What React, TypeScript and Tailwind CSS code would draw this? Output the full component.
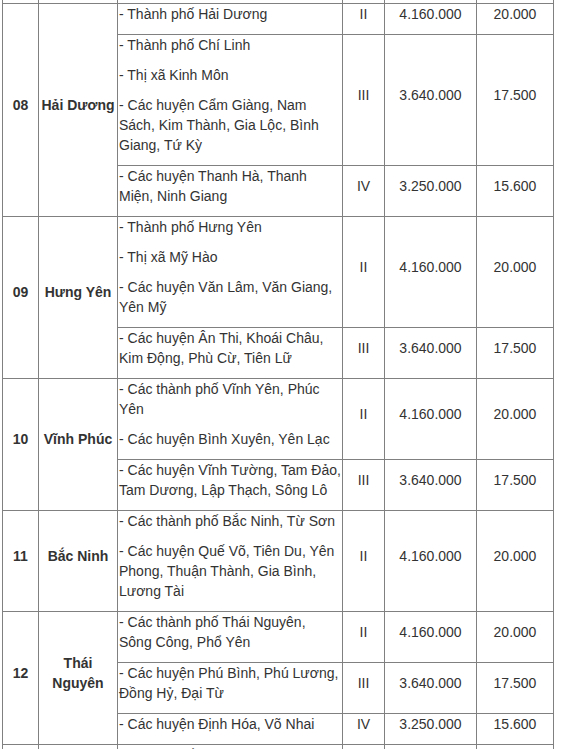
import React from "react";

type Row = { areas: string[]; region: string; monthly: string; hourly: string };
type Province = { no: string; name: string; rows: Row[] };

const provinces: Province[] = [
  {
    no: "08",
    name: "Hải Dương",
    rows: [
      { areas: ["- Thành phố Hải Dương"], region: "II", monthly: "4.160.000", hourly: "20.000" },
      {
        areas: [
          "- Thành phố Chí Linh",
          "- Thị xã Kinh Môn",
          "- Các huyện Cẩm Giàng, Nam Sách, Kim Thành, Gia Lộc, Bình Giang, Tứ Kỳ",
        ],
        region: "III",
        monthly: "3.640.000",
        hourly: "17.500",
      },
      { areas: ["- Các huyện Thanh Hà, Thanh Miện, Ninh Giang"], region: "IV", monthly: "3.250.000", hourly: "15.600" },
    ],
  },
  {
    no: "09",
    name: "Hưng Yên",
    rows: [
      {
        areas: ["- Thành phố Hưng Yên", "- Thị xã Mỹ Hào", "- Các huyện Văn Lâm, Văn Giang, Yên Mỹ"],
        region: "II",
        monthly: "4.160.000",
        hourly: "20.000",
      },
      {
        areas: ["- Các huyện Ân Thi, Khoái Châu, Kim Động, Phù Cừ, Tiên Lữ"],
        region: "III",
        monthly: "3.640.000",
        hourly: "17.500",
      },
    ],
  },
  {
    no: "10",
    name: "Vĩnh Phúc",
    rows: [
      {
        areas: ["- Các thành phố Vĩnh Yên, Phúc Yên", "- Các huyện Bình Xuyên, Yên Lạc"],
        region: "II",
        monthly: "4.160.000",
        hourly: "20.000",
      },
      {
        areas: ["- Các huyện Vĩnh Tường, Tam Đảo, Tam Dương, Lập Thạch, Sông Lô"],
        region: "III",
        monthly: "3.640.000",
        hourly: "17.500",
      },
    ],
  },
  {
    no: "11",
    name: "Bắc Ninh",
    rows: [
      {
        areas: [
          "- Các thành phố Bắc Ninh, Từ Sơn",
          "- Các huyện Quế Võ, Tiên Du, Yên Phong, Thuận Thành, Gia Bình, Lương Tài",
        ],
        region: "II",
        monthly: "4.160.000",
        hourly: "20.000",
      },
    ],
  },
  {
    no: "12",
    name: "Thái Nguyên",
    rows: [
      {
        areas: ["- Các thành phố Thái Nguyên, Sông Công, Phổ Yên"],
        region: "II",
        monthly: "4.160.000",
        hourly: "20.000",
      },
      {
        areas: ["- Các huyện Phú Bình, Phú Lương, Đồng Hỷ, Đại Từ"],
        region: "III",
        monthly: "3.640.000",
        hourly: "17.500",
      },
      { areas: ["- Các huyện Định Hóa, Võ Nhai"], region: "IV", monthly: "3.250.000", hourly: "15.600" },
    ],
  },
  {
    no: "13",
    name: "Phú Thọ",
    rows: [
      { areas: ["- Thành phố Việt Trì"], region: "II", monthly: "4.160.000", hourly: "20.000" },
    ],
  },
];

const cell = "border border-[#808080] px-[1px] py-0 align-middle";

export default function App() {
  return (
    <div className="min-h-screen bg-white" style={{ fontFamily: '"Liberation Sans", Arial, sans-serif' }}>
      <table className="ml-[2px] table-fixed border-collapse text-[14px] leading-[20px] text-[#333]">
        <colgroup>
          <col className="w-[36px]" />
          <col className="w-[79px]" />
          <col className="w-[225px]" />
          <col className="w-[42px]" />
          <col className="w-[92px]" />
          <col className="w-[77px]" />
        </colgroup>
        <tbody>
          {/* tail of the previous row */}
          <tr>
            {[0, 1, 2, 3, 4, 5].map((i) => (
              <td key={i} className="h-[3px] border-x border-b border-[#808080] p-0" />
            ))}
          </tr>
          {provinces.map((p) =>
            p.rows.map((r, idx) => (
              <tr key={p.no + idx}>
                {idx === 0 && (
                  <>
                    <td rowSpan={p.rows.length} className={`${cell} text-center font-bold`}>
                      <p className="mb-[10px]">{p.no}</p>
                    </td>
                    <td rowSpan={p.rows.length} className={`${cell} text-center font-bold`}>
                      <p className="mb-[10px]">{p.name}</p>
                    </td>
                  </>
                )}
                <td className={cell}>
                  {r.areas.map((a) => (
                    <p key={a} className="mb-[10px]">
                      {a}
                    </p>
                  ))}
                </td>
                <td className={`${cell} text-center`}>
                  <p className="mb-[10px]">{r.region}</p>
                </td>
                <td className={`${cell} text-center`}>
                  <p className="mb-[10px]">{r.monthly}</p>
                </td>
                <td className={`${cell} text-center`}>
                  <p className="mb-[10px]">{r.hourly}</p>
                </td>
              </tr>
            ))
          )}
        </tbody>
      </table>
    </div>
  );
}
